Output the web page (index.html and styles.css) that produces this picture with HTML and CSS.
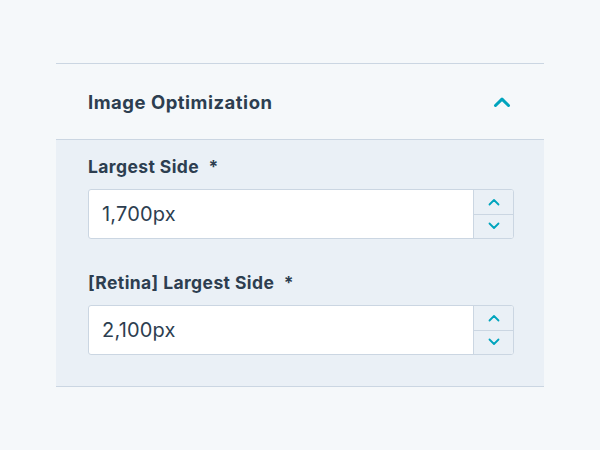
FILE: index.html
```html
<!DOCTYPE html>
<html>
<head>
    <title>Image Optimization</title>
    <link rel="stylesheet" href="styles.css">
</head>
<body>
    <div class="section">
        <div class="section-header">
            <h3>Image Optimization</h3>
            <svg class="toggle" width="18" height="12" viewBox="0 0 18 12">
                <path d="M2.5 9.5 L9 3.2 L15.5 9.5" fill="none" stroke="#00a4bd" stroke-width="3" stroke-linecap="round" stroke-linejoin="round"/>
            </svg>
        </div>

        <div class="section-body">
            <div class="form-group">
                <label for="largest">Largest Side <span class="req">*</span></label>
                <div class="number-input">
                    <input type="text" id="largest" value="1,700px">
                    <div class="stepper">
                        <button type="button">
                            <svg width="12" height="8" viewBox="0 0 12 8"><path d="M1.5 6.5 L6 2 L10.5 6.5" fill="none" stroke="#00a4bd" stroke-width="1.8" stroke-linecap="round" stroke-linejoin="round"/></svg>
                        </button>
                        <button type="button">
                            <svg width="12" height="8" viewBox="0 0 12 8"><path d="M1.5 1.5 L6 6 L10.5 1.5" fill="none" stroke="#00a4bd" stroke-width="1.8" stroke-linecap="round" stroke-linejoin="round"/></svg>
                        </button>
                    </div>
                </div>
            </div>

            <div class="form-group">
                <label for="retina">[Retina] Largest Side <span class="req">*</span></label>
                <div class="number-input">
                    <input type="text" id="retina" value="2,100px">
                    <div class="stepper">
                        <button type="button">
                            <svg width="12" height="8" viewBox="0 0 12 8"><path d="M1.5 6.5 L6 2 L10.5 6.5" fill="none" stroke="#00a4bd" stroke-width="1.8" stroke-linecap="round" stroke-linejoin="round"/></svg>
                        </button>
                        <button type="button">
                            <svg width="12" height="8" viewBox="0 0 12 8"><path d="M1.5 1.5 L6 6 L10.5 1.5" fill="none" stroke="#00a4bd" stroke-width="1.8" stroke-linecap="round" stroke-linejoin="round"/></svg>
                        </button>
                    </div>
                </div>
            </div>
        </div>
    </div>
</body>
</html>
```

FILE: styles.css
```css
body {
    margin: 0;
    padding: 63px 56px 0;
    background-color: #f5f8fa;
    font-family: "Inter", "Open Sans", sans-serif;
    color: #2d3e50;
}

.section {
    border-top: 1px solid #cbd6e2;
    border-bottom: 1px solid #cbd6e2;
}

.section-header {
    display: flex;
    justify-content: space-between;
    align-items: center;
    height: 75px;
    padding: 0 33px 0 32px;
    border-bottom: 1px solid #cbd6e2;
}

.section-header h3 {
    margin: 0;
    font-size: 18.5px;
    font-weight: 700;
    letter-spacing: 0.5px;
}

.section-body {
    background-color: #eaf0f6;
    padding: 15px 30px 31px 32px;
}

.form-group {
    margin-bottom: 32px;
}

.form-group:last-child {
    margin-bottom: 0;
}

label {
    display: block;
    height: 24px;
    line-height: 24px;
    margin-bottom: 10px;
    font-size: 17.5px;
    font-weight: 700;
    letter-spacing: 0.4px;
}

.req {
    margin-left: 5px;
}

.number-input {
    display: flex;
    height: 50px;
    box-sizing: border-box;
    border: 1px solid #cbd6e2;
    border-radius: 3px;
    background-color: #fff;
    overflow: hidden;
}

.number-input input {
    flex: 1;
    min-width: 0;
    border: none;
    outline: none;
    padding: 0 13px;
    font-family: inherit;
    font-size: 20px;
    letter-spacing: 0.2px;
    color: #2d3e50;
    background: transparent;
}

.stepper {
    display: flex;
    flex-direction: column;
    width: 39px;
    border-left: 1px solid #cbd6e2;
    background-color: #eaf0f6;
}

.stepper button {
    flex: 1;
    display: flex;
    align-items: center;
    justify-content: center;
    border: none;
    padding: 0;
    background: transparent;
    cursor: pointer;
}

.stepper button + button {
    border-top: 1px solid #cbd6e2;
}
```
